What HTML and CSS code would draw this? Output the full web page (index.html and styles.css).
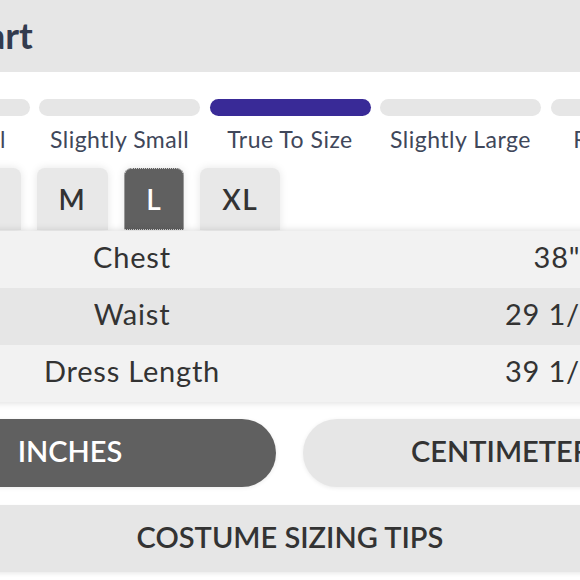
FILE: index.html
```html
<!DOCTYPE html>
<html>
<head>
<meta charset="utf-8">
<link rel="stylesheet" href="styles.css">
</head>
<body>
<div class="page">
  <div class="header"><h1 class="title">Size Chart</h1></div>

  <div class="fit">
    <div class="fit-item"><div class="bar"></div><div class="fit-label">Runs Small</div></div>
    <div class="fit-item"><div class="bar"></div><div class="fit-label">Slightly Small</div></div>
    <div class="fit-item"><div class="bar bar-active"></div><div class="fit-label">True To Size</div></div>
    <div class="fit-item"><div class="bar"></div><div class="fit-label">Slightly Large</div></div>
    <div class="fit-item"><div class="bar"></div><div class="fit-label">Runs Large</div></div>
  </div>

  <div class="tabs">
    <div class="tab">XS</div>
    <div class="tab">S</div>
    <div class="tab">M</div>
    <div class="tab tab-active">L</div>
    <div class="tab">XL</div>
  </div>

  <div class="table">
    <div class="row"><div class="cell-label">Chest</div><div class="cell-value">38"</div></div>
    <div class="row row-alt"><div class="cell-label">Waist</div><div class="cell-value">29 1/2"</div></div>
    <div class="row"><div class="cell-label">Dress Length</div><div class="cell-value">39 1/2"</div></div>
  </div>

  <div class="units">
    <div class="unit unit-active">INCHES</div>
    <div class="unit">CENTIMETERS</div>
  </div>

  <div class="tips">COSTUME SIZING TIPS</div>
</div>
</body>
</html>
```
FILE: styles.css
```css
html, body {
  margin: 0;
  padding: 0;
  background: #ffffff;
}
body {
  width: 580px;
  height: 580px;
  overflow: hidden;
  font-family: Lato, "Liberation Sans", sans-serif;
}
.page {
  width: 860px;
  margin-left: -140px;
}
.header {
  height: 72px;
  background: #e6e6e6;
  display: flex;
  align-items: center;
  padding-left: 6px;
}
.title {
  margin: 0;
  font-size: 37px;
  font-weight: 700;
  color: #333b4e;
  line-height: 1;
  margin-top: -4px;
}
.fit {
  display: grid;
  grid-template-columns: repeat(5, 1fr);
  column-gap: 9.5px;
  padding: 0 8.5px;
  margin-top: 27px;
}
.bar {
  height: 17px;
  border-radius: 9px;
  background: #e6e6e6;
}
.bar-active {
  background: #392a97;
}
.fit-label {
  text-align: center;
  font-size: 23px;
  letter-spacing: 0.5px;
  color: #40475a;
  margin-top: 9px;
  line-height: 28px;
  white-space: nowrap;
}
.tabs {
  display: flex;
  gap: 16px;
  padding-left: 3px;
  margin-top: 15px;
  height: 62px;
}
.tab {
  padding: 0 22px;
  display: flex;
  align-items: center;
  justify-content: center;
  background: #e8e8e8;
  border-radius: 8px 8px 0 0;
  box-shadow: 0 0 8px rgba(0, 0, 0, 0.10);
  font-size: 28px;
  font-weight: 600;
  letter-spacing: 1.5px;
  color: #333333;
}
.tab-active {
  background: #606060;
  color: #ffffff;
  outline: 1px dotted #d0d0d0;
  outline-offset: -1px;
}
.table {
  position: relative;
  margin-top: 1px;
  box-shadow: 0 0 8px rgba(0, 0, 0, 0.16);
}
.row {
  display: grid;
  grid-template-columns: 544px 306px 1fr;
  height: 57px;
  align-items: center;
  background: #f2f2f2;
  font-size: 29px;
  letter-spacing: 0.8px;
  color: #333333;
}
.row-alt {
  background: #e6e6e6;
}
.cell-label, .cell-value {
  text-align: center;
  white-space: nowrap;
  margin-top: -6px;
}
.units {
  display: flex;
  gap: 27px;
  padding-left: 4px;
  margin-top: 17px;
}
.unit {
  width: 412px;
  height: 68px;
  border-radius: 34px;
  background: #e6e6e6;
  display: flex;
  align-items: center;
  justify-content: center;
  font-size: 29px;
  font-weight: 600;
  color: #333333;
  padding-bottom: 5px;
  box-sizing: border-box;
  box-shadow: 0 1px 4px rgba(0, 0, 0, 0.08);
}
.unit-active {
  background: #606060;
  color: #ffffff;
}
.tips {
  margin-top: 18px;
  height: 67px;
  background: #e6e6e6;
  display: flex;
  align-items: center;
  justify-content: center;
  font-size: 29px;
  font-weight: 600;
  color: #333333;
  padding-bottom: 5px;
  box-sizing: border-box;
  box-shadow: 0 2px 4px rgba(0, 0, 0, 0.08);
}
```
